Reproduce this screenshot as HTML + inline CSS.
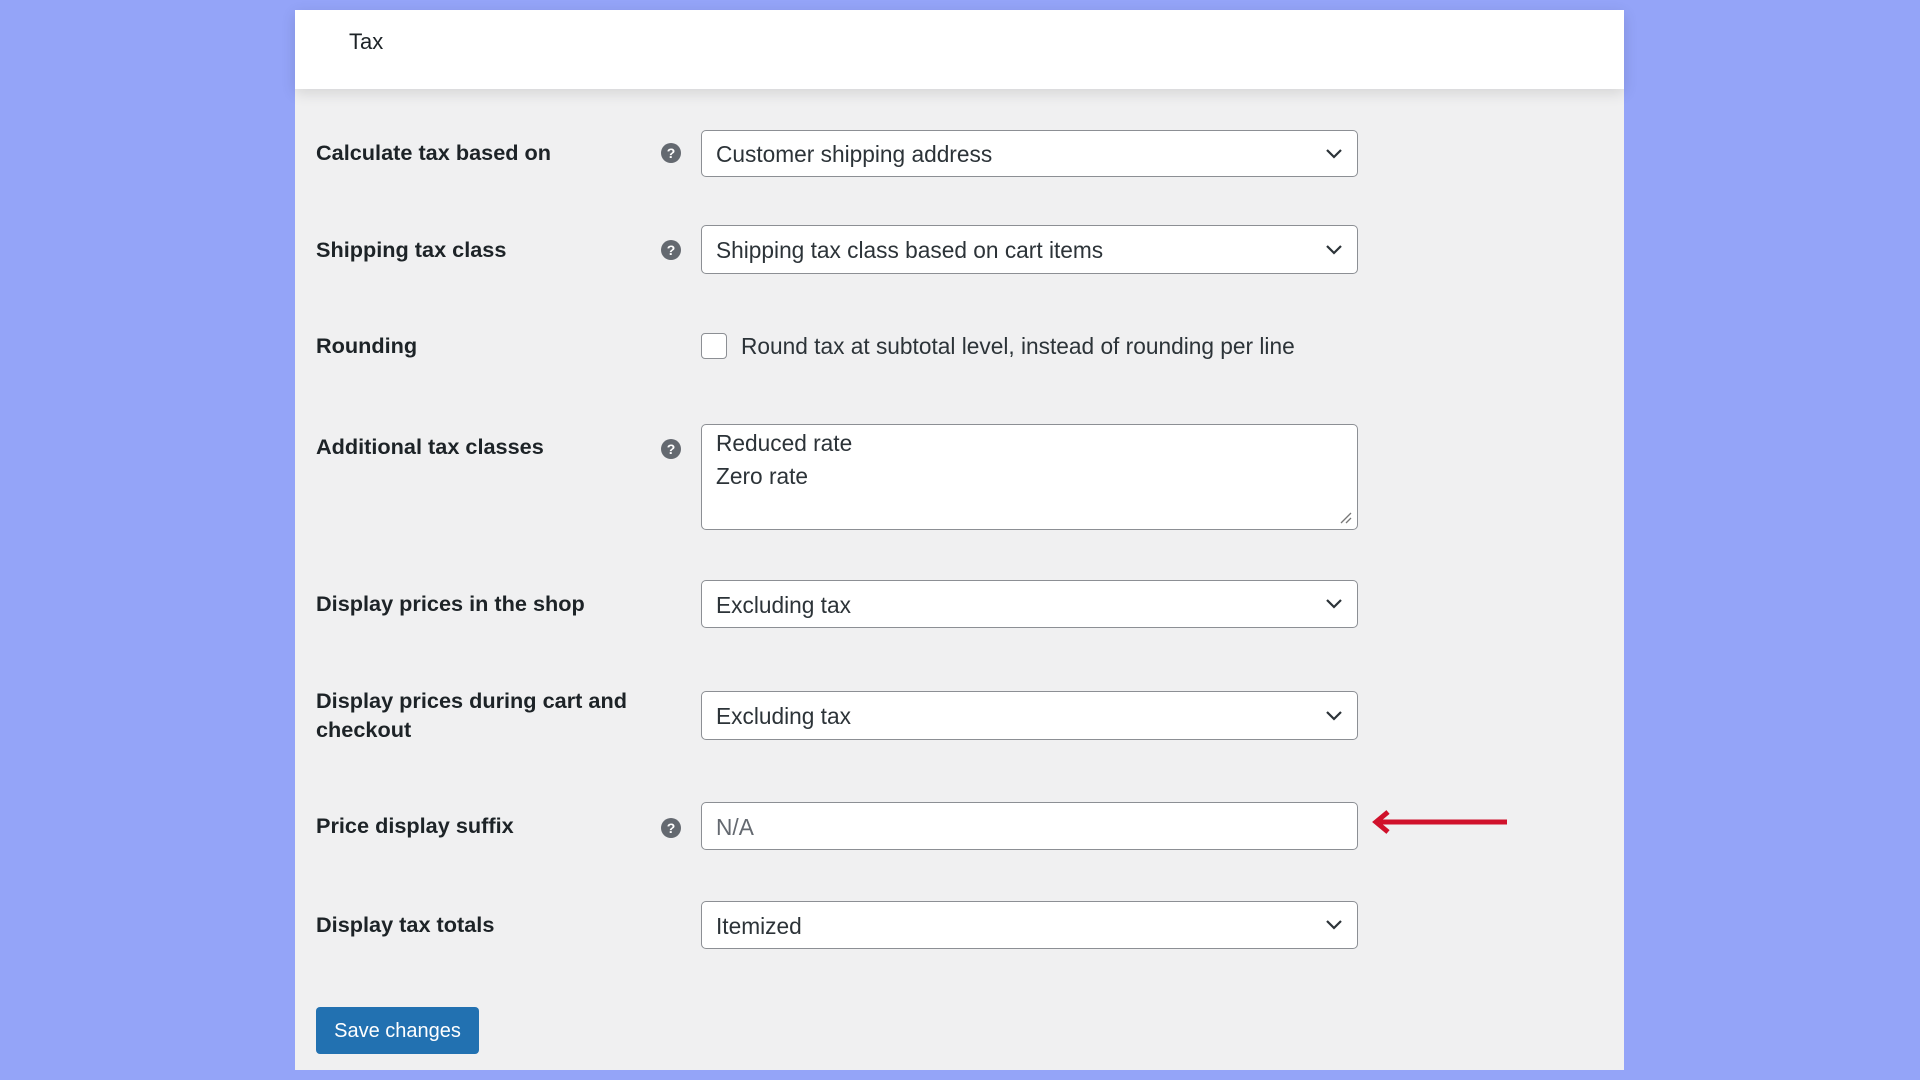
<!DOCTYPE html>
<html><head><meta charset="utf-8"><style>
*{box-sizing:border-box;margin:0;padding:0}
body{width:1920px;height:1080px;background:#94a4f8;font-family:"Liberation Sans",sans-serif;position:relative;overflow:hidden}
.panel{position:absolute;left:295px;top:10px;width:1329px;height:1060px;background:#f0f0f1}
.head{position:absolute;left:295px;top:10px;width:1329px;height:79px;background:#fff;box-shadow:0 4px 14px rgba(0,0,0,.12)}
.t{position:absolute;color:#1d2327}
.lab{position:absolute;left:316px;font-size:21.7px;font-weight:bold;color:#1d2327;line-height:29px}
.box{position:absolute;left:701px;width:657px;background:#fff;border:1.5px solid #8c8f94;border-radius:5px;font-size:22.7px;color:#2c3338;padding-left:14px;display:flex;align-items:center}
.box svg{position:absolute;right:14px;top:50%;margin-top:-6px}
.help{position:absolute;left:661px;width:20px;height:20px;border-radius:50%;background:#646970;color:#fff;font-size:14px;font-weight:bold;text-align:center;line-height:20px}
</style></head><body>
<div class="panel"></div>
<div class="head"></div>
<div class="t" style="left:349px;top:29px;font-size:22px">Tax</div>

<div class="lab" style="top:138px">Calculate tax based on</div>
<div class="help" style="top:143px">?</div>
<div class="box" style="top:130px;height:47px;padding-top:2px">Customer shipping address<svg width="18" height="12"><path d="M2 2l7 7 7-7" fill="none" stroke="#2c3338" stroke-width="2.2"/></svg></div>

<div class="lab" style="top:235px">Shipping tax class</div>
<div class="help" style="top:240px">?</div>
<div class="box" style="top:225px;height:49px;padding-top:2px">Shipping tax class based on cart items<svg width="18" height="12"><path d="M2 2l7 7 7-7" fill="none" stroke="#2c3338" stroke-width="2.2"/></svg></div>

<div class="lab" style="top:331px">Rounding</div>
<div style="position:absolute;left:701px;top:333px;width:26px;height:26px;border:1.5px solid #8c8f94;border-radius:4px;background:#fff"></div>
<div class="t" style="left:741px;top:333px;font-size:22.7px;color:#2c3338">Round tax at subtotal level, instead of rounding per line</div>

<div class="lab" style="top:432px">Additional tax classes</div>
<div class="help" style="top:439px">?</div>
<div class="box" style="top:424px;height:106px;padding-top:2px;line-height:33px;display:block">Reduced rate<br>Zero rate<svg width="14" height="14" style="top:auto;bottom:4px;right:4px;margin:0"><path d="M2 12L12 2M7 12L12 7" stroke="#777" stroke-width="1.3"/></svg></div>

<div class="lab" style="top:589px">Display prices in the shop</div>
<div class="box" style="top:580px;height:48px;padding-top:2px">Excluding tax<svg width="18" height="12"><path d="M2 2l7 7 7-7" fill="none" stroke="#2c3338" stroke-width="2.2"/></svg></div>

<div class="lab" style="top:686px">Display prices during cart and<br>checkout</div>
<div class="box" style="top:691px;height:49px;padding-top:2px">Excluding tax<svg width="18" height="12"><path d="M2 2l7 7 7-7" fill="none" stroke="#2c3338" stroke-width="2.2"/></svg></div>

<div class="lab" style="top:811px">Price display suffix</div>
<div class="help" style="top:818px">?</div>
<div class="box" style="top:802px;height:48px;color:#646970;padding-top:2px">N/A</div>
<svg style="position:absolute;left:1370px;top:808px" width="140" height="28"><path d="M10 14H137" stroke="#d0112b" stroke-width="5"/><path d="M18 4L6 14l12 10" fill="none" stroke="#d0112b" stroke-width="5"/></svg>

<div class="lab" style="top:910px">Display tax totals</div>
<div class="box" style="top:901px;height:48px;padding-top:2px">Itemized<svg width="18" height="12"><path d="M2 2l7 7 7-7" fill="none" stroke="#2c3338" stroke-width="2.2"/></svg></div>

<div style="position:absolute;left:316px;top:1007px;width:163px;height:47px;background:#2271b1;border-radius:4px;color:#fff;font-size:20px;text-align:center;line-height:49px">Save changes</div>
</body></html>
